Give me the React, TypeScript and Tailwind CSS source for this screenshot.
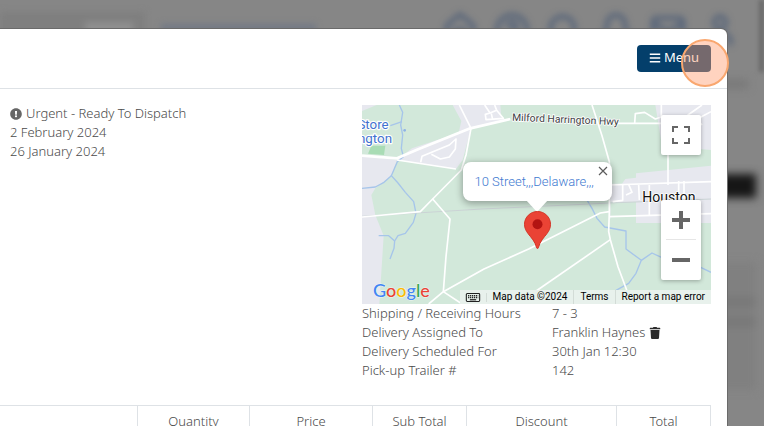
import { Bell, Home, HelpCircle, Mail, Search, User } from "lucide-react";
import { FaExclamationCircle, FaBars, FaTrash } from "react-icons/fa";

const details = [
  { label: "Shipping / Receiving Hours", value: "7 - 3" },
  { label: "Delivery Assigned To", value: "Franklin Haynes", removable: true },
  { label: "Delivery Scheduled For", value: "30th Jan 12:30" },
  { label: "Pick-up Trailer #", value: "142" },
];

const columns = [
  { name: "Quantity", width: "w-[112px]" },
  { name: "Price", width: "w-[123px]" },
  { name: "Sub Total", width: "w-[94px]" },
  { name: "Discount", width: "w-[150px]" },
  { name: "Total", width: "w-[94px]" },
];

/** The dimmed, blurred page behind the dialog. */
function Backdrop() {
  return (
    <div aria-hidden="true" className="absolute inset-0 overflow-hidden bg-[#868686]">
      <div className="flex h-14 items-start justify-between pr-[26px] pt-[12px] blur-[3px]">
        <div className="flex items-center gap-4">
          <div className="flex h-6 w-[145px] items-center justify-end bg-[#7f7f7f] pr-3 pt-2">
            <div className="h-3 w-12 bg-[#8f8f8f]" />
          </div>
          <div className="mt-2 h-2 w-[155px] bg-[#737985]" />
        </div>
        <div className="flex gap-4 text-[#59667a]">
          <Home size={36} strokeWidth={3} />
          <HelpCircle size={36} strokeWidth={3} />
          <Search size={36} strokeWidth={3} />
          <Bell size={36} strokeWidth={3} />
          <Mail size={36} strokeWidth={3} />
          <User size={36} strokeWidth={3} />
        </div>
      </div>
      <div className="flex flex-col items-end blur-[4px]">
        <div className="mr-4 mt-6 h-2 w-8 bg-[#777777]" />
        <div className="mr-2 mt-[86px] h-6 w-16 bg-[#161616]" />
        <div className="mr-2 mt-16 flex h-32 w-16 flex-col gap-3 bg-[#808080] pt-9">
          <div className="h-2 bg-[#767676]" />
          <div className="h-2 bg-[#767676]" />
        </div>
      </div>
      <div className="absolute right-0 top-0 h-[72px] w-[5px] bg-[#686868] blur-[2px]" />
    </div>
  );
}

function MapTiles() {
  return (
    <svg
      viewBox="0 0 1047 597"
      preserveAspectRatio="xMidYMid slice"
      className="absolute inset-0 h-full w-full"
    >
      <rect width="1047" height="597" fill="#d2e8da" />

      {/* built-up areas */}
      <g fill="#e7e8ef">
        <path d="M0 0H44L0 18Z" />
        <path d="M272 0H415L418 38L440 45L327 70L302 165L282 192L105 165L150 130L290 84L298 48Z" />
        <path d="M0 152L105 165L88 212L40 250L28 270L40 330L65 392L52 597H0Z" />
        <path d="M745 0H1047V135L905 150L900 182L832 202L760 218L745 170Z" fill="#d2e8da" />
        <path d="M880 0H1047V135L900 122Z" />
        <path d="M780 236L790 222L822 218V205L1047 182V354H822V328L745 342V236Z" />
        <path d="M746 290H822V355H746Z" fill="#d2e8da" />
        <path d="M746 238H822V290H746Z" />
      </g>
      <path d="M28 122L70 122L66 150L18 146Z" fill="#a9dcb5" />

      {/* creeks */}
      <g fill="none" stroke="#a6c5ea" strokeWidth="4" strokeLinejoin="round">
        <path d="M112 0L122 22L116 60L122 90L118 130L124 155L106 170L88 212L108 234L130 262L155 290L162 325L154 352L130 385L108 392L98 408L96 430L84 462" />
        <path d="M0 250L40 246L66 232L88 212" />
        <path d="M50 392L80 392L98 408" />
        <path d="M85 62L120 50" />
        <path d="M672 280L690 310L705 340L728 366L792 378L792 432L838 466L822 505L800 535L762 556" />
        <path d="M838 466L870 444L900 458L980 470L1047 502" />
      </g>
      <circle cx="128" cy="76" r="4" fill="#8fb2e6" />

      {/* railway */}
      <path
        d="M0 334L360 312L620 300L742 294L1047 282"
        fill="none"
        stroke="#cbd3d5"
        strokeWidth="3"
      />

      {/* minor roads */}
      <g fill="none" stroke="#ffffff" strokeWidth="5" strokeLinejoin="round">
        <path d="M105 165L282 192" />
        <path d="M0 336L175 320L212 282L264 342L252 455L244 560" />
        <path d="M212 282L298 195L312 150L327 70L292 0" />
        <path d="M200 597L244 560L366 492L500 432L715 324L742 320" />
        <path d="M244 560L300 597" />
        <path d="M505 570L745 404" />
        <path d="M690 0L720 92L742 170L742 320L740 380L745 404L768 485L796 560" />
        <path d="M742 240L1047 230" />
        <path d="M742 335L1047 326" />
        <path d="M750 55H900" />
        <path d="M818 55L820 26L848 22L880 42L898 36V0" />
        <path d="M918 140V240" />
        <path d="M862 240V330M830 240L832 285M800 238L810 262L792 270M782 240V286L752 290M950 228V282M966 228V282" />
        <path d="M176 172L180 154L262 120L282 102L280 132L262 156L235 162L208 148" />
        <path d="M368 0L384 24L404 16L398 0M404 16L424 40L372 44L370 28L384 24M388 26L392 44" />
        <path d="M1047 20L1010 40L978 30L1020 0M1000 36L1020 60" />
      </g>

      {/* highway */}
      <path
        d="M0 152L105 160L165 134L325 70L445 42"
        fill="none"
        stroke="#ffffff"
        strokeWidth="8"
        strokeLinejoin="round"
      />

      <g className="font-[Roboto,sans-serif]" strokeLinejoin="round" paintOrder="stroke">
        <text x="450" y="47" fontSize="31" fill="#3c4043" stroke="#ffffff" strokeWidth="5" transform="rotate(2.5 450 47)">
          Milford Harrington Hwy
        </text>
        <g fontSize="40" fill="#4272cf" stroke="#ffffff" strokeWidth="7">
          <text x="80" y="72" textAnchor="end">Store</text>
          <text x="90" y="113" textAnchor="end">ngton</text>
        </g>
        <text x="841" y="292" fontSize="42" fill="#111111" stroke="#ffffff" strokeWidth="5">
          Houston
        </text>
      </g>
    </svg>
  );
}

function DeliveryMap() {
  return (
    <section
      aria-label="Delivery location"
      className="relative h-[199px] overflow-hidden font-[Roboto,sans-serif] font-normal"
    >
      <MapTiles />

      {/* Info window */}
      <div className="absolute left-1/2 top-[57px] ml-[-74px] w-[149px] rounded-lg bg-white py-[10px] pl-3 shadow-[0_2px_7px_1px_rgba(0,0,0,0.3)]">
        <a href="#map" className="block whitespace-nowrap text-[13px] font-light leading-[19px] text-[#4079d0]">
          10 Street,,,Delaware,,,
        </a>
        <button type="button" aria-label="Close" className="absolute right-1 top-1 text-[#5c5c5c]">
          <svg viewBox="0 0 10 10" className="size-[10px]" stroke="currentColor" strokeWidth="1.2">
            <path d="M1 1L9 9M9 1L1 9" />
          </svg>
        </button>
        <svg viewBox="0 0 22 12" className="absolute left-[63px] top-[38px] h-3 w-[22px]" fill="#ffffff">
          <path d="M0 0H22L11 12Z" />
        </svg>
      </div>

      {/* Marker */}
      <svg viewBox="0 0 27 38" className="absolute left-1/2 top-[106px] ml-[-13px] h-[38px] w-[27px]">
        <path
          d="M13.500 .5C6.300 .5 .5 6.200 .5 13.300C.5 17 2 19.900 4 22.500C7.500 27 11 30.500 12.400 36C12.600 37 12.900 37.500 13.500 37.500S14.400 37 14.600 36C16 30.500 19.500 27 23 22.500C25 19.900 26.500 17 26.500 13.300C26.500 6.200 20.700 .5 13.500 .5Z"
          fill="#ea4335"
          stroke="#d33426"
        />
        <circle cx="13.500" cy="13.300" r="5" fill="#b31412" />
      </svg>

      {/* Controls */}
      <button
        type="button"
        aria-label="Toggle fullscreen view"
        className="absolute right-[10px] top-[10px] flex size-10 items-center justify-center rounded-xs bg-white shadow-[0_1px_4px_rgba(0,0,0,0.3)]"
      >
        <svg viewBox="0 0 18 18" className="size-[18px]" fill="#666666">
          <path d="M0 0V6H2V2H6V0ZM16 0H12V2H16V6H18V0ZM16 16H12V18H18V12H16ZM2 12H0V18H6V16H2Z" />
        </svg>
      </button>
      <div className="absolute right-[10px] top-[95px] flex w-10 flex-col rounded-xs bg-white shadow-[0_1px_4px_rgba(0,0,0,0.3)]">
        <button type="button" aria-label="Zoom in" className="flex h-[39px] items-center justify-center">
          <svg viewBox="0 0 18 18" className="size-[18px]" fill="#666666">
            <path d="M18 7H11V0H7V7H0V11H7V18H11V11H18Z" />
          </svg>
        </button>
        <div className="mx-[5px] h-px bg-[#e6e6e6]" />
        <button type="button" aria-label="Zoom out" className="flex h-10 items-center justify-center">
          <svg viewBox="0 0 18 18" className="size-[18px]" fill="#666666">
            <path d="M0 7H18V11H0Z" />
          </svg>
        </button>
      </div>

      {/* Logo */}
      <a
        href="#google"
        className="absolute bottom-1 left-[11px] font-[Lato,sans-serif] text-[18px] font-medium leading-5 [paint-order:stroke] [-webkit-text-stroke:1px_#eef6f1]"
      >
        <span className="text-[#4285f4]">G</span>
        <span className="text-[#ea4335]">o</span>
        <span className="text-[#fbbc05]">o</span>
        <span className="text-[#4285f4]">g</span>
        <span className="text-[#34a853]">l</span>
        <span className="text-[#ea4335]">e</span>
      </a>

      {/* Attribution bar */}
      <div className="absolute bottom-0 right-0 flex h-[14px] items-center divide-x divide-[#d3dcd7] bg-[#e8f1ec] text-[10px] leading-[14px] text-black">
        <button type="button" aria-label="Keyboard shortcuts" className="px-[5px]">
          <svg viewBox="0 0 16 10" className="h-[9px] w-4">
            <rect x=".6" y=".6" width="14.800" height="8.800" rx="1" fill="#e8f1ec" stroke="#222222" strokeWidth="1.200" />
            <path
              d="M2.500 2.800H13.800M2.500 5H13.800"
              stroke="#222222"
              strokeWidth="1.400"
              strokeDasharray="1.400 .8"
            />
            <path d="M4.500 7.500H11.500" stroke="#222222" strokeWidth="1.400" />
          </svg>
        </button>
        <span className="px-[6px]">Map data ©2024</span>
        <a href="#terms" className="px-[6px]">Terms</a>
        <a href="#report" className="px-[6px]">Report a map error</a>
      </div>
    </section>
  );
}

export default function App() {
  return (
    <div className="relative h-screen overflow-hidden font-['Noto_Sans',sans-serif] text-[13px] font-light leading-[19px] text-[#4a4a4a]">
      <Backdrop />

      <div
        role="dialog"
        aria-label="Order details"
        className="relative mr-[37px] mt-[29px] min-h-screen rounded-tr-md bg-white shadow-[0_0_0_1px_#6a6a6a]"
      >
        <header className="flex justify-end border-b border-[#dee2e6] px-4 py-4">
          <div className="relative">
            <button
              type="button"
              className="flex h-[27px] w-[74px] items-center justify-center gap-[3px] rounded-sm bg-[#043f6b] pb-[2px] font-normal text-white"
            >
              <FaBars size={12} />
              Menu
            </button>
            {/* Click highlight */}
            <div className="pointer-events-none absolute -right-[18px] -top-[6px] size-12 rounded-full border-2 border-[#f9a76f] bg-[#ff9d72]/45" />
          </div>
        </header>

        <div className="grid grid-cols-2 gap-[3px] pl-[10px] pr-4 pt-4">
          <div className="-mt-px">
            <p className="flex items-center gap-1">
              <FaExclamationCircle size={12} className="text-[#666666]" />
              Urgent - Ready To Dispatch
            </p>
            <p>2 February 2024</p>
            <p>26 January 2024</p>
          </div>

          <div>
            <DeliveryMap />
            <dl>
              {details.map((row) => (
                <div key={row.label} className="flex">
                  <dt className="w-[190px]">{row.label}</dt>
                  <dd className="flex items-center gap-1">
                    {row.value}
                    {row.removable && (
                      <button type="button" aria-label="Remove driver" className="text-[#2b2b2b]">
                        <FaTrash size={12} />
                      </button>
                    )}
                  </dd>
                </div>
              ))}
            </dl>
          </div>
        </div>

        <div className="pr-4 pt-[25px]">
          <table className="w-full table-fixed border-collapse">
            <thead>
              <tr className="border-y border-[#dee2e6]">
                <th aria-label="Item" />
                {columns.map((col) => (
                  <th
                    key={col.name}
                    className={`border-x border-[#dee2e6] py-[6px] text-center font-light ${col.width}`}
                  >
                    {col.name}
                  </th>
                ))}
              </tr>
            </thead>
          </table>
        </div>
      </div>
    </div>
  );
}
